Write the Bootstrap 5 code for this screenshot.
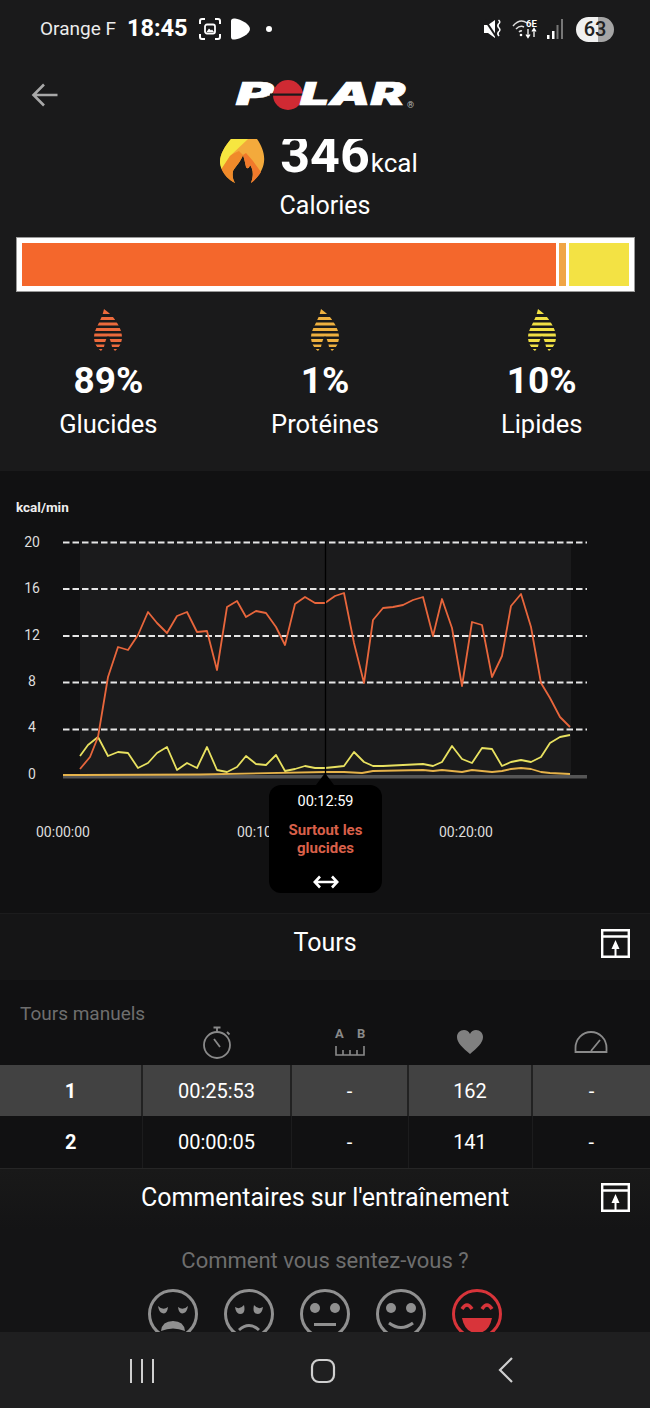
<!DOCTYPE html>
<html lang="fr">
<head>
    <meta charset="UTF-8">
    <meta name="viewport" content="width=device-width, initial-scale=1.0">
    <title>Polar - Calories</title>
    <link href="https://cdn.jsdelivr.net/npm/bootstrap@5.3.0/dist/css/bootstrap.min.css" rel="stylesheet">
    <style>
        body {
            background: #1a1a1b;
            color: #fff;
            font-family: Roboto, "Liberation Sans", sans-serif;
        }
        .phone { width: 650px; height: 1408px; overflow: hidden; }
        .screen { flex: 1 1 auto; min-height: 0; overflow: hidden; }

        .status-bar { height: 58px; padding: 0 36px 0 40px; flex: none; }
        .carrier { font-size: 19px; color: #ececec; width: 87px; }
        .clock { font-size: 23.500px; font-weight: 700; width: 72px; }
        .battery {
            width: 38px; height: 25px; border-radius: 13px;
            background: linear-gradient(90deg, #f0f0f0 58%, #a5a5a5 58%);
            color: #222; font-size: 20px; font-weight: 500; line-height: 25px; text-align: center;
        }

        .top-bar { height: 81px; flex: none; }
        .back-btn { left: 31px; top: 25px; }
        .logo-box { left: 230px; top: 14px; }

        .cal-head { height: 47px; overflow: hidden; padding-right: 12px; flex: none; }
        .cal-num { font-size: 52px; font-weight: 700; line-height: 32px; margin-left: 15px; }
        .cal-unit { font-size: 26px; line-height: 34px; margin-left: 1px; margin-top: 7px; }
        .cal-label { font-size: 25px; line-height: 30px; height: 51px; padding-top: 5px; }

        .macro-bar {
            margin: 0 15px 0 16px; height: 55px; padding: 5px;
            background: #fff; border: 1px solid #999;
        }
        .seg-a { background: #f4672c; width: 534px; }
        .seg-b { background: #f0a545; width: 7px; margin: 0 3px; }
        .seg-c { background: #f3e244; flex: 1; }

        .macro-row { height: 179px; padding-top: 17px; }
        .macro-col { width: 217px; }
        .macro-pct { font-size: 37px; font-weight: 700; line-height: 44px; margin-top: 8px; }
        .macro-name { font-size: 25.500px; line-height: 30px; margin-top: 6px; }
        .tone-carb { color: #ec6a3c; }
        .tone-prot { color: #eeb03f; }
        .tone-fat { color: #f0e044; }

        .chart-zone { height: 442px; background: #111112; flex: none; }
        .chart-svg { display: block; }
        .chart-svg text { font-family: Roboto, "Liberation Sans", sans-serif; }
        .tip-box {
            left: 269px; top: 314px; width: 113px; height: 108px;
            background: #000; border-radius: 12px; text-align: center;
        }
        .tip-box::before {
            content: ""; position: absolute; left: 47px; top: -12px;
            border: 9px solid transparent; border-top: 0; border-bottom: 12px solid #000;
        }
        .tip-time { font-size: 14.500px; line-height: 18px; padding-top: 8px; }
        .tip-text { font-size: 15px; font-weight: 700; line-height: 18px; color: #d9604a; margin-top: 10px; }
        .tip-arrows { margin-top: 18px; }

        .fold-head {
            height: 67px; background: #151516; border-top: 1px solid #1c1c1d;
            font-size: 25px; flex: none;
        }
        .fold-head.second { height: 60px; background: linear-gradient(#191919, #141415); }
        .fold-icon { right: 20px; top: 15px; }
        .second .fold-icon { top: 14px; }

        .laps { background: #111112; flex: none; }
        .laps-title { height: 44px; padding: 19px 0 0 20px; font-size: 19px; line-height: 30px; color: #6e6e6e; }
        .lap-table { table-layout: fixed; width: 650px; }
        .lap-table > :not(caption) > * > * {
            background: transparent; color: #fff; box-shadow: none;
            padding: 0; text-align: center; vertical-align: middle;
            font-size: 20px; border: 0;
        }
        .lap-table thead th { height: 41px; font-weight: 400; }
        .lap-table tbody td { height: 51px; border-right: 1px solid #1c1c1d; }
        .lap-table tbody tr.active-lap > * { background: #424242; border-right: 2px solid #222; }
        .lap-table tbody tr:last-child td { height: 52px; border-bottom: 1px solid #262626; }
        .lap-table tbody td:last-child, .lap-table tbody tr.active-lap > *:last-child { border-right: 0; }
        .lap-no { font-weight: 700; }
        .head-ico { margin-top: -5px; }
        .head-ico-up { margin-top: -9px; }

        .mood { background: #141415; padding-top: 17px; }
        .mood-q { font-size: 22px; line-height: 30px; color: #6e6e6e; text-align: center; }
        .mood-faces { gap: 26px; margin-top: 13px; }

        .nav-bottom { height: 76px; background: #1f1f20; flex: none; }
    </style>
</head>
<body>
    <svg width="0" height="0" class="position-absolute">
        <defs>
            <clipPath id="dropClip">
                <path d="M10 0 L15 4 C21 9 28 20 28 28 C28 34 25 39 21 42 L18 38 C17 33 16 30 14 27 C12 30 11 33 10 38 L7 42 C3 39 0 34 0 28 C0 20 8 11 10 0Z"/>
            </clipPath>
            <symbol id="drop" viewBox="0 0 28 42">
                <g clip-path="url(#dropClip)" fill="currentColor">
                    <rect x="0" y="0" width="28" height="5"/>
                    <rect x="0" y="8" width="28" height="3"/>
                    <rect x="0" y="13.500" width="28" height="3"/>
                    <rect x="0" y="19" width="28" height="3"/>
                    <rect x="0" y="24.500" width="28" height="3"/>
                    <rect x="0" y="30" width="28" height="3"/>
                    <rect x="0" y="35.500" width="28" height="2.500"/>
                    <rect x="0" y="40" width="28" height="2"/>
                </g>
            </symbol>
            <symbol id="foldIcon" viewBox="0 0 29 29">
                <path d="M1.200 1.200H27.800V27.800H1.200Z M1.200 7.500H27.800" fill="none" stroke="#fff" stroke-width="2.400"/>
                <path d="M14.500 11 L18.500 20 H15.500 V27 H13.500 V20 H10.500Z" fill="#fff"/>
            </symbol>
        </defs>
    </svg>

    <div class="phone d-flex flex-column">
        <div class="screen">
            <!-- status bar -->
            <div class="status-bar d-flex align-items-center">
                <span class="carrier">Orange F</span>
                <span class="clock">18:45</span>
                <svg width="22" height="22" viewBox="0 0 22 22" fill="none" stroke="#fff" stroke-width="2">
                    <path d="M1 6V3Q1 1 3 1H6 M16 1H19Q21 1 21 3V6 M21 16V19Q21 21 19 21H16 M6 21H3Q1 21 1 19V16"/>
                    <rect x="6" y="6.500" width="10" height="9" rx="2" stroke-width="1.800"/>
                    <path d="M7.500 14L10 10.500L12 12.500L13 11.500L15 14Z" fill="#fff" stroke="none"/>
                </svg>
                <svg width="22" height="22" viewBox="0 0 22 22" class="ms-2">
                    <path d="M2 3 Q2 0 6 0.500 C12 1.500 21 6 21 11 C21 16 12 20.500 6 21.500 Q2 22 2 19Z" fill="#fff"/>
                </svg>
                <svg width="8" height="8" viewBox="0 0 8 8" style="margin-left:14px"><circle cx="4" cy="4" r="3" fill="#fff"/></svg>
                <div class="ms-auto d-flex align-items-center gap-2">
                    <svg width="20" height="20" viewBox="0 0 20 20">
                        <path d="M0 6H4L11 1V19L4 14H0Z" fill="#fff"/>
                        <path d="M1 1L13 19" stroke="#1a1a1b" stroke-width="2"/>
                        <path d="M14.500 1Q17 3 14.500 5Q13 7 15 9Q17 11 14.500 13Q13 15 15 17" fill="none" stroke="#fff" stroke-width="1.600"/>
                    </svg>
                    <svg width="26" height="22" viewBox="0 0 26 22">
                        <path d="M1 8Q8 0 15 5 M4 11Q8 7 12 9 M7 14Q8.500 12.500 10 13" fill="none" stroke="#ddd" stroke-width="1.500"/>
                        <circle cx="9" cy="17" r="1.300" fill="#fff"/>
                        <text x="14" y="9" font-size="9.500" font-weight="700" fill="#fff">6E</text>
                        <path d="M16 11V19M14 16.500L16 19.500L18 16.500 M22 19V11M20 13.500L22 10.500L24 13.500" fill="none" stroke="#fff" stroke-width="1.300"/>
                    </svg>
                    <svg width="18" height="22" viewBox="0 0 18 22">
                        <rect x="1" y="17" width="2.500" height="4" fill="#fff"/>
                        <rect x="6" y="13" width="2.500" height="8" fill="#fff"/>
                        <rect x="10.500" y="7" width="2" height="14" fill="#777"/>
                        <rect x="15" y="1" width="2" height="20" fill="#777"/>
                    </svg>
                    <div class="battery ms-1">63</div>
                </div>
            </div>

            <!-- app header -->
            <div class="top-bar position-relative">
                <svg class="back-btn position-absolute" width="27" height="24" viewBox="0 0 27 24" fill="none" stroke="#a8a8a8" stroke-width="2.600">
                    <path d="M13 1.500L2.500 12L13 22.500 M3 12H26.500"/>
                </svg>
                <svg class="logo-box position-absolute" width="190" height="48" viewBox="230 72 190 48" role="img" aria-label="POLAR">
                    <text x="236" y="105" font-family="Inter, 'Liberation Sans', sans-serif" font-size="32" font-weight="900" font-style="italic" fill="#fff" stroke="#fff" stroke-width=".7" textLength="37" lengthAdjust="spacingAndGlyphs">P</text>
                    <circle cx="288" cy="95" r="15" fill="#cf2a33"/>
                    <rect x="270" y="93.500" width="36" height="2.200" fill="#1a1a1b"/>
                    <text x="300" y="105" font-family="Inter, 'Liberation Sans', sans-serif" font-size="32" font-weight="900" font-style="italic" fill="#fff" stroke="#fff" stroke-width=".7" textLength="105" lengthAdjust="spacingAndGlyphs">LAR</text>
                    <text x="407" y="108" font-family="Roboto, sans-serif" font-size="9" fill="#b8b8b8">®</text>
                </svg>
            </div>

            <!-- calories -->
            <div class="cal-head d-flex justify-content-center align-items-start">
                <svg width="45" height="44" viewBox="0 0 45 44">
                    <path d="M11 0H37C42 7 45 15 44 23C43 32 37 39 31 44C34 36 33 30 30 26C29 30 27 30 26 28C25 23 24 19 23 16C21 22 16 27 13 32C12 37 13 41 15 44C7 40 1 32 0 23C0 15 5 7 11 0Z" fill="#f3aa3c"/>
                    <path d="M11 0H28L10 17L1.500 30C0.500 27 0 25 0 23C0 15 5 7 11 0Z" fill="#f6e640"/>
                    <path d="M1.500 30L10 17C14 14 17 13 19 12L23 16C21 22 16 27 13 32C12 37 13 41 15 44C9 41 4 36 1.500 30Z" fill="#f08a2a"/>
                    <path d="M26 28C27 30 29 30 30 26C33 30 34 36 31 44C34 42 38 38 41 33L33 22L26 14L23 16C24 19 25 23 26 28Z" fill="#f0792b"/>
                </svg>
                <span class="cal-num">346</span>
                <span class="cal-unit">kcal</span>
            </div>
            <div class="cal-label text-center">Calories</div>

            <div class="macro-bar d-flex">
                <div class="seg-a"></div>
                <div class="seg-b"></div>
                <div class="seg-c"></div>
            </div>

            <div class="macro-row d-flex text-center">
                <div class="macro-col">
                    <svg width="28" height="42" class="tone-carb d-block mx-auto"><use href="#drop"/></svg>
                    <div class="macro-pct">89%</div>
                    <div class="macro-name">Glucides</div>
                </div>
                <div class="macro-col">
                    <svg width="28" height="42" class="tone-prot d-block mx-auto"><use href="#drop"/></svg>
                    <div class="macro-pct">1%</div>
                    <div class="macro-name">Protéines</div>
                </div>
                <div class="macro-col">
                    <svg width="28" height="42" class="tone-fat d-block mx-auto"><use href="#drop"/></svg>
                    <div class="macro-pct">10%</div>
                    <div class="macro-name">Lipides</div>
                </div>
            </div>

            <!-- chart -->
            <div class="chart-zone position-relative">
                <svg class="chart-svg" width="650" height="442" viewBox="0 471 650 442">
                    <rect x="80" y="541" width="491" height="235" fill="#1b1b1c"/>
                    <text x="16" y="512" font-size="13.500" font-weight="700" fill="#eee">kcal/min</text>
                    <g font-size="14" fill="#ddd" text-anchor="middle">
                        <text x="32" y="547">20</text>
                        <text x="32" y="593">16</text>
                        <text x="32" y="640">12</text>
                        <text x="32" y="686">8</text>
                        <text x="32" y="732">4</text>
                        <text x="32" y="779">0</text>
                        <text x="63" y="837">00:00:00</text>
                        <text x="264" y="837">00:10:00</text>
                        <text x="466" y="837">00:20:00</text>
                    </g>
                    <g stroke="#e6e6e6" stroke-width="1.800" stroke-dasharray="6.500 3">
                        <path d="M63 542.500H587"/>
                        <path d="M63 589H587"/>
                        <path d="M63 636H587"/>
                        <path d="M63 682.500H587"/>
                        <path d="M63 729.500H587"/>
                    </g>
                    <rect x="63" y="775" width="524" height="3.500" fill="#555"/>
                    <g fill="none" stroke-width="1.800" stroke-linejoin="round">
                        <polyline stroke="#e5b24a" points="63,775 80,775 200,774.500 325,772 344,772 362,773 373,771 423,770 433,771 442,770 462,772 472,770 492,772 502,771 511,769 521,768 531,769 541,772 550,773 570,774"/>
                        <polyline stroke="#e8e160" points="80,756 88,745 98,737 108,756 118,752 128,753 138,768 148,763 157,753 167,747 177,770 187,763 197,768 207,747 217,770 227,772 237,767 246,756 256,764 266,765 276,755 285,771 295,769 305,766 315,768 325,768 335,767 344,766 354,752 364,762 373,766 383,766 403,765 423,764 433,766 442,762 452,746 462,759 472,763 482,748 492,749 502,766 511,762 521,760 531,762 541,757 550,743 560,737 570,735"/>
                        <polyline stroke="#e8663c" points="80,769 90,757 98,737 108,677 118,647 128,650 138,635 148,612 157,623 167,633 177,616 187,612 197,632 207,631 217,670 227,607 237,601 246,617 256,611 266,613 276,627 285,645 295,604 305,597 315,603 325,603 335,596 344,593 354,643 364,683 373,620 383,608 393,607 403,605 413,600 423,597 433,636 442,599 452,628 462,686 472,622 482,625 492,677 502,656 511,606 521,594 531,627 541,683 550,698 560,717 570,727"/>
                    </g>
                    <path d="M325.500 541V790" stroke="#000" stroke-width="1.300"/>
                </svg>
                <div class="tip-box position-absolute">
                    <div class="tip-time">00:12:59</div>
                    <div class="tip-text">Surtout les<br>glucides</div>
                    <div class="tip-arrows">
                        <svg width="26" height="14" viewBox="0 0 26 14" class="d-block mx-auto" fill="none" stroke="#fff" stroke-width="2.600">
                            <path d="M7 1.500L1.800 7L7 12.500 M19 1.500L24.200 7L19 12.500 M2 7H24"/>
                        </svg>
                    </div>
                </div>
            </div>

            <!-- tours -->
            <div class="fold-head position-relative d-flex align-items-center justify-content-center">
                <span style="margin-top:-8px">Tours</span>
                <svg class="fold-icon position-absolute" width="29" height="29"><use href="#foldIcon"/></svg>
            </div>
            <div class="laps">
                <div class="laps-title">Tours manuels</div>
                <table class="table table-borderless mb-0 lap-table">
                    <colgroup>
                        <col style="width:142px"><col style="width:149px"><col style="width:117px"><col style="width:124px"><col style="width:118px">
                    </colgroup>
                    <thead>
                        <tr>
                            <th></th>
                            <th>
                                <svg width="30" height="34" viewBox="0 0 30 34" fill="none" stroke="#8a8a8a" stroke-width="1.800" class="head-ico">
                                    <circle cx="15" cy="19" r="13"/>
                                    <path d="M11.500 1.500H18.500 M15 1.500V6 M25 6L27.500 8.500 M12 13L18 21"/>
                                </svg>
                            </th>
                            <th>
                                <svg width="32" height="34" viewBox="0 0 32 34" fill="none" stroke="#8a8a8a" stroke-width="1.600" class="head-ico">
                                    <text x="1" y="12" font-size="13" font-weight="700" fill="#8a8a8a" stroke="none">A</text>
                                    <text x="23" y="12" font-size="13" font-weight="700" fill="#8a8a8a" stroke="none">B</text>
                                    <path d="M2 20V29H30V20 M9 24V29 M16 24V29 M23 24V29"/>
                                </svg>
                            </th>
                            <th>
                                <svg width="26" height="24" viewBox="0 0 26 24" fill="#808080" class="head-ico-up">
                                    <path d="M13 24C6 18 0 13 0 7C0 3 3 0 7 0C9.500 0 12 1.500 13 4C14 1.500 16.500 0 19 0C23 0 26 3 26 7C26 13 20 18 13 24Z"/>
                                </svg>
                            </th>
                            <th>
                                <svg width="34" height="24" viewBox="0 0 34 24" fill="none" stroke="#8a8a8a" stroke-width="1.800" class="head-ico-up">
                                    <path d="M1.500 22H32.500V18A15.500 16 0 0 0 1.500 18Z M17 21L26 10"/>
                                </svg>
                            </th>
                        </tr>
                    </thead>
                    <tbody>
                        <tr class="active-lap">
                            <td class="lap-no">1</td><td>00:25:53</td><td>-</td><td>162</td><td>-</td>
                        </tr>
                        <tr>
                            <td class="lap-no">2</td><td>00:00:05</td><td>-</td><td>141</td><td>-</td>
                        </tr>
                    </tbody>
                </table>
            </div>

            <!-- comments -->
            <div class="fold-head second position-relative d-flex align-items-center justify-content-center border-0">
                <span style="margin-top:-2px">Commentaires sur l'entraînement</span>
                <svg class="fold-icon position-absolute" width="29" height="29"><use href="#foldIcon"/></svg>
            </div>
            <div class="mood">
                <div class="mood-q">Comment vous sentez-vous ?</div>
                <div class="mood-faces d-flex justify-content-center">
                    <svg width="50" height="50" viewBox="0 0 50 50" fill="none" stroke="#909090" stroke-width="3">
                        <circle cx="25" cy="25" r="23.500"/>
                        <path d="M10 17Q15 22 20 18Q19 26 14 24Q11 23 10 17Z M40 17Q35 22 30 18Q31 26 36 24Q39 23 40 17Z" fill="#909090" stroke="none"/>
                        <path d="M13 42Q14 32 25 32Q36 32 37 42Q25 37 13 42Z" fill="#909090" stroke="none"/>
                    </svg>
                    <svg width="50" height="50" viewBox="0 0 50 50" fill="none" stroke="#909090" stroke-width="3">
                        <circle cx="25" cy="25" r="23.500"/>
                        <path d="M11 18Q16 21 20 16Q22 25 16 25Q12 25 11 18Z M39 18Q34 21 30 16Q28 25 34 25Q38 25 39 18Z" fill="#909090" stroke="none"/>
                        <path d="M15 41Q25 32 35 41"/>
                    </svg>
                    <svg width="50" height="50" viewBox="0 0 50 50" fill="none" stroke="#909090" stroke-width="3">
                        <circle cx="25" cy="25" r="23.500"/>
                        <circle cx="15" cy="19" r="5" fill="#909090" stroke="none"/>
                        <circle cx="35" cy="19" r="5" fill="#909090" stroke="none"/>
                        <path d="M14 35.500H36"/>
                    </svg>
                    <svg width="50" height="50" viewBox="0 0 50 50" fill="none" stroke="#909090" stroke-width="3">
                        <circle cx="25" cy="25" r="23.500"/>
                        <circle cx="15" cy="19" r="5" fill="#909090" stroke="none"/>
                        <circle cx="35" cy="19" r="5" fill="#909090" stroke="none"/>
                        <path d="M13 34Q25 43 37 34"/>
                    </svg>
                    <svg width="50" height="50" viewBox="0 0 50 50" fill="none" stroke="#d8343a" stroke-width="3">
                        <circle cx="25" cy="25" r="23.500"/>
                        <path d="M10 20Q15 12 20 20 M30 20Q35 12 40 20" stroke-width="3.500"/>
                        <path d="M10 29H40Q37 44 25 44Q13 44 10 29Z" fill="#d8343a" stroke="none"/>
                    </svg>
                </div>
            </div>
        </div>

        <!-- android nav -->
        <div class="nav-bottom position-relative d-flex align-items-center">
            <svg width="24" height="24" viewBox="0 0 24 24" stroke="#cfcfcf" stroke-width="2" style="margin:1px 0 0 130px">
                <path d="M1 0V24M12 0V24M23 0V24"/>
            </svg>
            <svg width="26" height="26" viewBox="0 0 26 26" fill="none" stroke="#cfcfcf" stroke-width="2.200" style="margin:1px 0 0 156px">
                <rect x="2" y="2" width="22" height="22" rx="7"/>
            </svg>
            <svg width="16" height="26" viewBox="0 0 16 26" fill="none" stroke="#cfcfcf" stroke-width="2.200" style="margin:0 0 0 162px">
                <path d="M14 1L2 13L14 25"/>
            </svg>
        </div>
    </div>

    <script src="https://cdn.jsdelivr.net/npm/bootstrap@5.3.0/dist/js/bootstrap.bundle.min.js"></script>
</body>
</html>
